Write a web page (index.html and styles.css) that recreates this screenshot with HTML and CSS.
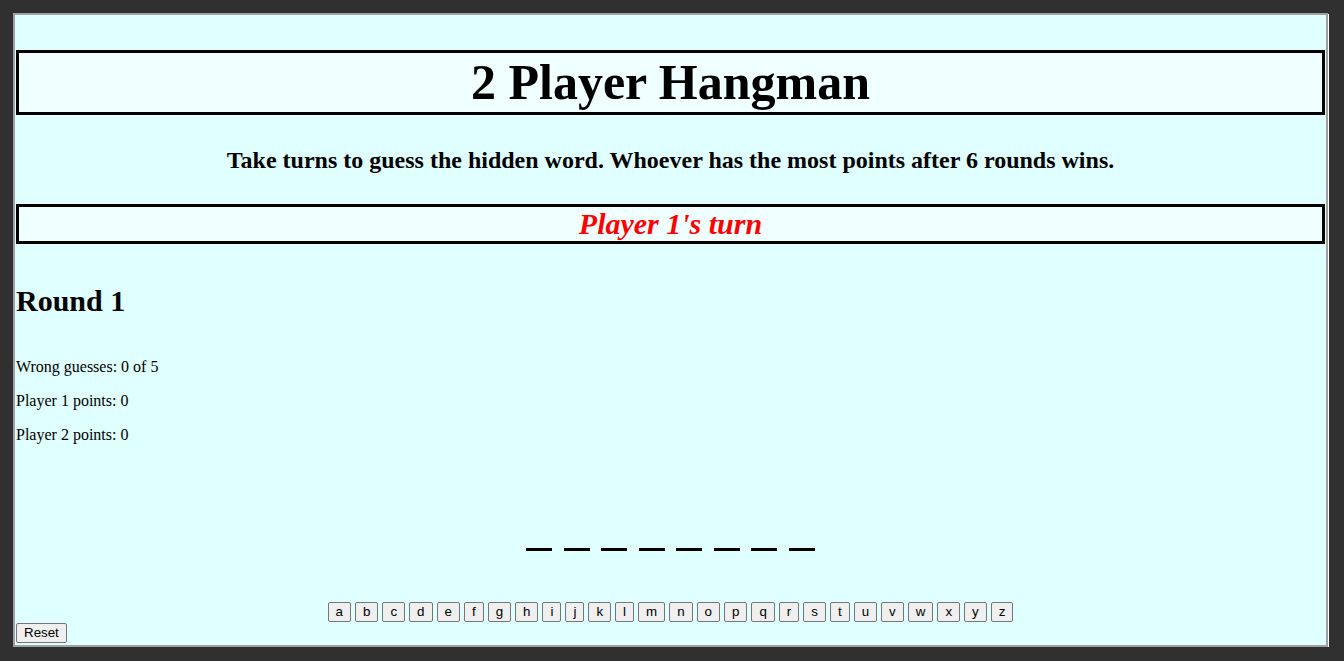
FILE: index.html
```html
<!DOCTYPE html>
<html>
<head>
<meta charset="utf-8">
<title>2 Player Hangman</title>
<link rel="stylesheet" href="styles.css">
</head>
<body>
<div class="frame">
  <h1 class="title">2 Player Hangman</h1>
  <h3 class="intro">Take turns to guess the hidden word. Whoever has the most points after 6 rounds wins.</h3>
  <h2 class="turn">Player 1's turn</h2>
  <h2 class="round">Round 1</h2>
  <p class="stat">Wrong guesses: 0 of 5</p>
  <p class="stat">Player 1 points: 0</p>
  <p class="stat">Player 2 points: 0</p>
  <div class="word">
    <span class="blank"></span><span class="blank"></span><span class="blank"></span><span class="blank"></span><span class="blank"></span><span class="blank"></span><span class="blank"></span><span class="blank"></span>
  </div>
  <div class="letters">
    <button class="key">a</button> <button class="key">b</button> <button class="key">c</button> <button class="key">d</button> <button class="key">e</button> <button class="key">f</button> <button class="key">g</button> <button class="key">h</button> <button class="key">i</button> <button class="key">j</button> <button class="key">k</button> <button class="key">l</button> <button class="key">m</button> <button class="key">n</button> <button class="key">o</button> <button class="key">p</button> <button class="key">q</button> <button class="key">r</button> <button class="key">s</button> <button class="key">t</button> <button class="key">u</button> <button class="key">v</button> <button class="key">w</button> <button class="key">x</button> <button class="key">y</button> <button class="key">z</button>
  </div>
  <button class="key reset">Reset</button>
</div>
</body>
</html>
```
FILE: styles.css
```css
html, body {
  margin: 0;
  padding: 0;
  background: #303030;
}
body {
  padding: 13px 0 0 13px;
  font-family: "Liberation Serif", "Times New Roman", serif;
  color: #000;
}
.frame {
  box-sizing: border-box;
  width: 1315px;
  height: 634px;
  border: 2px solid #a0a0a0;
  box-shadow: 1px 1px 0 #ffffff;
  background: #e0ffff;
  padding: 0 1px;
  overflow: hidden;
}
.title {
  margin: 35px 0 0;
  border: 3px solid #000;
  background: #f0ffff;
  text-align: center;
  font-size: 50px;
  line-height: 59px;
  font-weight: bold;
}
.intro {
  margin: 32px 0 0;
  text-align: center;
  font-size: 24px;
  line-height: 27px;
  font-weight: bold;
}
.turn {
  margin: 30px 0 0;
  border: 3px solid #000;
  background: #f0ffff;
  text-align: center;
  color: #ff0000;
  font-style: italic;
  font-size: 30px;
  line-height: 34px;
  font-weight: bold;
}
.round {
  margin: 38px 0 0;
  font-size: 30px;
  line-height: 37px;
  font-weight: bold;
}
.stat {
  margin: 16px 0 0;
  font-size: 16px;
  line-height: 18px;
}
.stat:first-of-type {
  margin-top: 39px;
}
.word {
  display: flex;
  justify-content: center;
  gap: 11.5px;
  margin-top: 104px;
  height: 3px;
}
.blank {
  width: 26px;
  height: 3px;
  background: #000;
}
.letters {
  margin-top: 51px;
  text-align: center;
  font-size: 16px;
  line-height: 20px;
}
.key {
  font-family: Arial, "Liberation Sans", sans-serif;
  font-size: 13.333px;
  line-height: 16px;
  padding: 1px 7px;
  margin: 0;
  background: #efefef;
  border: 1px solid #767676;
  border-radius: 2px;
  color: #000;
  vertical-align: top;
}
.reset {
  display: block;
  margin-top: 1px;
}
```
